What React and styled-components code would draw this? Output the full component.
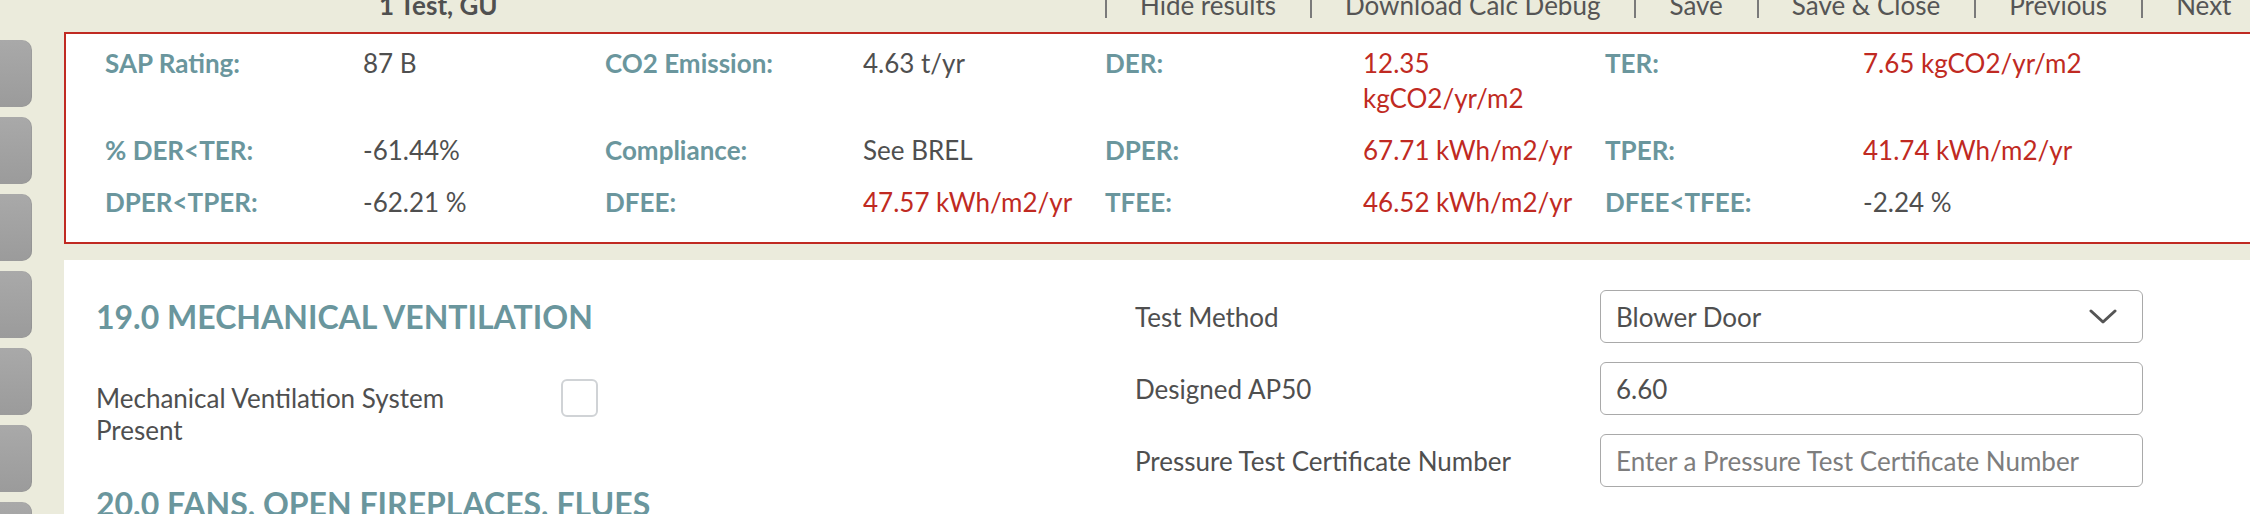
import styled, { createGlobalStyle } from "styled-components";

const GlobalStyle = createGlobalStyle`
  html, body {
    margin: 0;
    padding: 0;
    overflow: hidden;
    background: #ebebdc;
  }
  body {
    font-family: Lato, "Open Sans", sans-serif;
    font-size: 26px;
    color: #4f4f4f;
  }
`;

const Page = styled.div`
  display: flex;
  width: 2340px;
  height: 514px;
  overflow: hidden;
`;

const Sidebar = styled.div`
  display: flex;
  flex-direction: column;
  gap: 10px;
  width: 32px;
  padding-top: 40px;
  flex-shrink: 0;
`;

const SideTab = styled.div`
  height: 67px;
  flex-shrink: 0;
  border-radius: 0 10px 10px 0;
  background: linear-gradient(#a9a9a9, #9b9b9b);
  box-shadow: inset -1px 0 0 rgba(0, 0, 0, 0.06);
`;

const Main = styled.div`
  display: flex;
  flex-direction: column;
  flex: 1;
  margin-left: 32px;
`;

const TopBar = styled.div`
  display: flex;
  align-items: flex-start;
  flex-shrink: 0;
  height: 32px;
  padding-left: 315px;
  overflow: hidden;
`;

const Title = styled.div`
  width: 726px;
  margin-top: -8px;
  font-size: 26px;
  line-height: 26px;
  font-weight: 700;
  color: #505050;
`;

const Nav = styled.nav`
  display: flex;
`;

const NavItem = styled.a`
  display: block;
  height: 18px;
  padding: 0 34px 0 33px;
  border-left: 2px solid #7a7a7a;
  white-space: nowrap;
  text-decoration: none;
  & > span {
    display: block;
    margin-top: -8px;
    font-size: 26px;
    line-height: 26px;
    color: #555;
  }
`;

const Results = styled.div`
  flex-shrink: 0;
  background: #fff;
  border: 2px solid #c02a22;
  padding: 3px 0 14px 39px;
  display: grid;
  grid-template-columns: repeat(3, 258px 242px) 258px 320px;
`;

const Cell = styled.div`
  padding: 9px 0 8px;
  padding-right: ${(p) => (p.$label ? "10px" : "26px")};
  font-size: 26px;
  line-height: 35px;
  font-weight: ${(p) => (p.$label ? 700 : 400)};
  color: ${(p) => (p.$label ? "#6a969d" : p.$red ? "#c02a22" : "#4f4f4f")};
`;

const Panel = styled.div`
  margin-top: 16px;
  flex: 1 0 auto;
  background: #fff;
  padding: 30px 32px 0;
  display: grid;
  grid-template-columns: 1039px 1008px;
  align-items: start;
`;

const Column = styled.div`
  display: flex;
  flex-direction: column;
`;

const Heading = styled.h2`
  margin: 0;
  margin-top: ${(p) => p.$top || 0}px;
  font-size: 32px;
  line-height: 53px;
  font-weight: 700;
  color: #6a969d;
  white-space: nowrap;
`;

const CheckRow = styled.div`
  display: flex;
  align-items: flex-start;
  gap: 45px;
  margin-top: 39px;
`;

const FieldLabel = styled.div`
  width: ${(p) => p.$width || 465}px;
  flex-shrink: 0;
  font-size: 26px;
  line-height: 32px;
  color: #4f4f4f;
`;

const Checkbox = styled.div`
  box-sizing: border-box;
  width: 37px;
  height: 38px;
  margin-top: -3px;
  border: 2.5px solid #d0d3d6;
  border-radius: 6px;
  background: #fff;
`;

const Form = styled.div`
  display: flex;
  flex-direction: column;
  gap: 19px;
`;

const FormRow = styled.div`
  display: flex;
  align-items: center;
`;

const Field = styled.div`
  box-sizing: border-box;
  width: 543px;
  height: 53px;
  display: flex;
  align-items: center;
  justify-content: space-between;
  padding: 0 25px 0 15px;
  border: 1.5px solid #a9a9a9;
  border-radius: 6px;
  font-size: 26px;
  color: ${(p) => (p.$placeholder ? "#7d7d7d" : "#4f4f4f")};
  white-space: nowrap;
  overflow: hidden;
`;

const Chevron = () => (
  <svg width="28" height="16" viewBox="0 0 28 16">
    <polyline
      points="2,2 14,13 26,2"
      fill="none"
      stroke="#555"
      strokeWidth="3"
      strokeLinecap="round"
      strokeLinejoin="round"
    />
  </svg>
);

const results = [
  ["SAP Rating:", "87 B", "CO2 Emission:", "4.63 t/yr", "DER:", "12.35 kgCO2/yr/m2", "TER:", "7.65 kgCO2/yr/m2"],
  ["% DER<TER:", "-61.44%", "Compliance:", "See BREL", "DPER:", "67.71 kWh/m2/yr", "TPER:", "41.74 kWh/m2/yr"],
  ["DPER<TPER:", "-62.21 %", "DFEE:", "47.57 kWh/m2/yr", "TFEE:", "46.52 kWh/m2/yr", "DFEE<TFEE:", "-2.24 %"],
];

const isRed = (v) => /kWh|kgCO2/.test(v);

const navLinks = ["Hide results", "Download Calc Debug", "Save", "Save & Close", "Previous", "Next"];

export default function App() {
  return (
    <>
      <GlobalStyle />
      <Page>
        <Sidebar>
          {Array.from({ length: 7 }).map((_, i) => (
            <SideTab key={i} />
          ))}
        </Sidebar>
        <Main>
          <TopBar>
            <Title>1 Test, GU</Title>
            <Nav>
              {navLinks.map((l) => (
                <NavItem key={l}>
                  <span>{l}</span>
                </NavItem>
              ))}
            </Nav>
          </TopBar>
          <Results>
            {results.flat().map((v, i) => (
              <Cell key={i} $label={i % 2 === 0} $red={isRed(v)}>
                {v}
              </Cell>
            ))}
          </Results>
          <Panel>
            <Column>
              <Heading>19.0 MECHANICAL VENTILATION</Heading>
              <CheckRow>
                <FieldLabel $width={420}>Mechanical Ventilation System Present</FieldLabel>
                <Checkbox />
              </CheckRow>
              <Heading $top={31}>20.0 FANS, OPEN FIREPLACES, FLUES</Heading>
            </Column>
            <Form>
              <FormRow>
                <FieldLabel>Test Method</FieldLabel>
                <Field>
                  Blower Door
                  <Chevron />
                </Field>
              </FormRow>
              <FormRow>
                <FieldLabel>Designed AP50</FieldLabel>
                <Field>6.60</Field>
              </FormRow>
              <FormRow>
                <FieldLabel>Pressure Test Certificate Number</FieldLabel>
                <Field $placeholder>Enter a Pressure Test Certificate Number</Field>
              </FormRow>
            </Form>
          </Panel>
        </Main>
      </Page>
    </>
  );
}
